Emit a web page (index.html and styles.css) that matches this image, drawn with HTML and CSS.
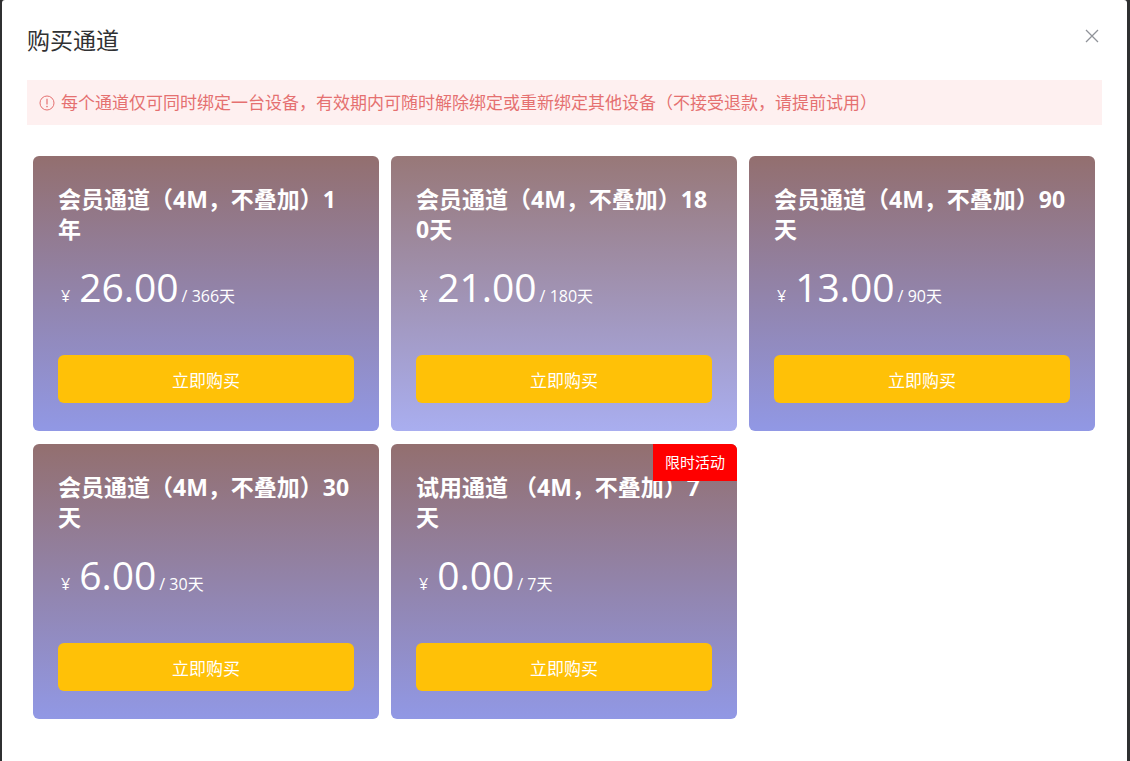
FILE: index.html
```
<!DOCTYPE html>
<html lang="zh-CN">
<head>
    <meta charset="utf-8">
    <meta name="viewport" content="width=device-width, initial-scale=1">
    <title>购买通道</title>
    <link rel="stylesheet" href="styles.css">
</head>
<body>
<div class="dialog" role="dialog" aria-labelledby="dialogTitle">
    <div class="dialog-header">
        <h2 id="dialogTitle">购买通道</h2>
        <button class="close" type="button" aria-label="关闭">
            <svg width="14" height="14" viewBox="0 0 14 14"><path d="M1 1L13 13M13 1L1 13" fill="none" stroke="#909399" stroke-width="1.3"/></svg>
        </button>
    </div>
    <div class="alert">
        <svg width="16" height="16" viewBox="0 0 16 16"><circle cx="8" cy="8" r="7" fill="none" stroke="currentColor"/><path d="M8 3.8V9.4" stroke="currentColor" stroke-width="1.2"/><circle cx="8" cy="11.6" r="0.8" fill="currentColor"/></svg>
        <span>每个通道仅可同时绑定一台设备，有效期内可随时解除绑定或重新绑定其他设备（不接受退款，请提前试用）</span>
    </div>
    <div class="cards">
        <div class="card">
            <h3>会员通道（4M，不叠加）1年</h3>
            <p class="price"><span class="unit">¥</span><span class="num">26.00</span><span>/ 366天</span></p>
            <button class="buy" type="button">立即购买</button>
        </div>
        <div class="card active">
            <h3>会员通道（4M，不叠加）180天</h3>
            <p class="price"><span class="unit">¥</span><span class="num">21.00</span><span>/ 180天</span></p>
            <button class="buy" type="button">立即购买</button>
        </div>
        <div class="card">
            <h3>会员通道（4M，不叠加）90天</h3>
            <p class="price"><span class="unit">¥</span><span class="num">13.00</span><span>/ 90天</span></p>
            <button class="buy" type="button">立即购买</button>
        </div>
        <div class="card">
            <h3>会员通道（4M，不叠加）30天</h3>
            <p class="price"><span class="unit">¥</span><span class="num">6.00</span><span>/ 30天</span></p>
            <button class="buy" type="button">立即购买</button>
        </div>
        <div class="card">
            <span class="badge">限时活动</span>
            <h3>试用通道 （4M，不叠加）7天</h3>
            <p class="price"><span class="unit">¥</span><span class="num">0.00</span><span>/ 7天</span></p>
            <button class="buy" type="button">立即购买</button>
        </div>
    </div>
</div>
</body>
</html>
```
FILE: styles.css
```
* {
    box-sizing: border-box;
}
body {
    margin: 0;
    padding: 0 3px 0 2px;
    background-color: #2f3031;
    font-family: "Open Sans", "Noto Sans CJK SC", sans-serif;
    color: #303133;
}
.dialog {
    min-height: 100vh;
    padding: 25px;
    background: white;
    border-radius: 3px 3px 0 0;
}
.dialog-header {
    display: flex;
    justify-content: space-between;
    align-items: flex-start;
    margin-bottom: 24px;
}
h2 {
    margin: 0;
    font-size: 23px;
    font-weight: normal;
    line-height: 31px;
}
.close {
    display: flex;
    margin: 4px 3px 0 0;
    padding: 0;
    border: none;
    background: none;
    cursor: pointer;
}
.alert {
    display: flex;
    align-items: center;
    gap: 6px;
    padding: 10px 12px;
    background-color: #fef0f0;
    color: #e57070;
    font-size: 17px;
    line-height: 25px;
}
.alert svg {
    flex-shrink: 0;
}
.cards {
    display: grid;
    grid-template-columns: repeat(3, 1fr);
    gap: 13px 12px;
    padding: 31px 7px 0 6px;
}
.card {
    position: relative;
    padding: 28px 25px;
    border-radius: 6px;
    background: linear-gradient(#936f6f, #9198e5);
    color: white;
    overflow: hidden;
}
.card.active {
    background: linear-gradient(#987878, #a9aef0);
}
h3 {
    margin: 0;
    font-size: 23px;
    line-height: 30px;
    word-break: break-all;
}
.price {
    display: flex;
    align-items: baseline;
    margin: 15px 0 31px;
    padding-left: 3px;
    font-size: 16px;
    line-height: 56px;
}
.unit {
    margin-right: 9px;
}
.num {
    margin-right: 3px;
    font-size: 39px;
}
.buy {
    display: block;
    width: 100%;
    height: 48px;
    border: none;
    border-radius: 6px;
    background-color: #ffc107;
    color: white;
    font-family: inherit;
    font-size: 17px;
    cursor: pointer;
}
.badge {
    position: absolute;
    top: 0;
    right: 0;
    padding: 0 12px;
    background-color: red;
    font-size: 15px;
    line-height: 37px;
}
```
